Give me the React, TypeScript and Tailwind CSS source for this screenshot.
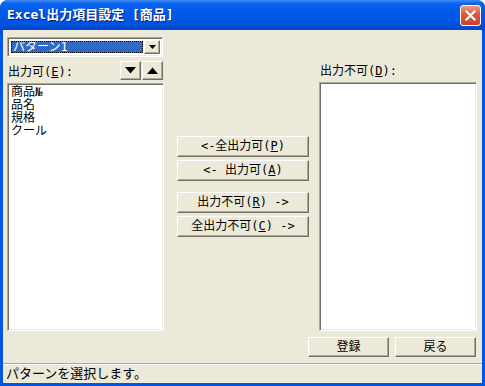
import type { ReactNode } from 'react';

const font = { fontFamily: '"DejaVu Sans Mono", "Noto Sans CJK JP", monospace' };

const raised =
  'border border-t-white border-l-white border-r-[#716f64] border-b-[#716f64] shadow-[inset_-1px_-1px_0_#aca899] bg-[#ece9d8]';
const sunken =
  'border border-t-[#aca899] border-l-[#aca899] border-r-white border-b-white shadow-[inset_1px_1px_0_#716f64,inset_-1px_-1px_0_#f1efe2] bg-white';

function Btn({ children, className = '' }: { children: ReactNode; className?: string }) {
  return (
    <div className={`${raised} flex items-center justify-center text-[12px] leading-[13px] text-black ${className}`}>
      {children}
    </div>
  );
}

function Tri({ down }: { down?: boolean }) {
  return (
    <svg width="11" height="7" viewBox="0 0 11 7">
      {down ? <polygon points="0,0 11,0 5.5,6.5" fill="#000" /> : <polygon points="0,7 11,7 5.5,0.5" fill="#000" />}
    </svg>
  );
}

export default function App() {
  const items = ['商品№', '品名', '規格', 'クール'];

  return (
    <div className="w-[485px] h-[386px] flex flex-col bg-[#0055e5] rounded-t-[8px] overflow-hidden select-none text-black" style={font}>
      {/* title bar */}
      <div className="h-[30px] shrink-0 flex items-center justify-between pl-[7px] pr-[4px] bg-[linear-gradient(to_bottom,#3f8cf3_0%,#0a62ef_12%,#0058e8_45%,#0053e0_80%,#0046c8_100%)]">
        <span className="text-white text-[13px] font-bold [text-shadow:1px_1px_0_#0a246a]">
          Excel出力項目設定 [商品]
        </span>
        <div className="w-[21px] h-[21px] rounded-[3px] border border-white bg-[linear-gradient(to_bottom,#f09a80,#e2583e_40%,#c94426)] flex items-center justify-center">
          <svg width="11" height="11" viewBox="0 0 11 11">
            <path d="M1.5 1.5 L9.5 9.5 M9.5 1.5 L1.5 9.5" stroke="#fff" strokeWidth="2.2" strokeLinecap="square" />
          </svg>
        </div>
      </div>

      {/* client */}
      <div className="flex-1 flex flex-col ml-[3px] mr-[3px] mb-[3px] bg-[#ece9d8]">
        <div className="flex-1 flex flex-col">
          <div className="flex pl-[4px] h-[301px]">
            {/* left column */}
            <div className="w-[157px] flex flex-col">
              <div className={`${sunken} mt-[7px] h-[20px] w-[156px] flex items-stretch p-[2px]`}>
                <div className="flex-1 m-px bg-[#316ac5] outline-1 outline-dotted outline-black -outline-offset-1 flex items-center pl-[2px] text-white text-[12px] leading-[13px]">
                  パターン1
                </div>
                <div className={`${raised} w-[16px] flex items-center justify-center`}>
                  <svg width="7" height="4" viewBox="0 0 7 4">
                    <polygon points="0,0 7,0 3.5,4" fill="#000" />
                  </svg>
                </div>
              </div>
              <div className="flex items-center mt-[4px] h-[19px]">
                <span className="text-[12px] leading-[13px] pl-[1px] mt-[4px]">
                  出力可(<u>E</u>):
                </span>
                <div className="ml-auto flex gap-[1px] pr-[1px]">
                  <Btn className="w-[21px] h-[19px]">
                    <Tri down />
                  </Btn>
                  <Btn className="w-[21px] h-[19px]">
                    <Tri />
                  </Btn>
                </div>
              </div>
              <div className={`${sunken} mt-[3px] flex-1 px-[3px] py-[2px] text-[12px] leading-[13px]`}>
                {items.map((it) => (
                  <div key={it}>{it}</div>
                ))}
              </div>
            </div>

            {/* middle buttons */}
            <div className="w-[132px] ml-[13px] flex flex-col pt-[106px]">
              <Btn className="h-[21px]">
                &lt;-全出力可(<u>P</u>)
              </Btn>
              <Btn className="h-[21px] mt-[3px]">
                &lt;- 出力可(<u>A</u>)
              </Btn>
              <Btn className="h-[21px] mt-[11px]">
                出力不可(<u>R</u>) -&gt;
              </Btn>
              <Btn className="h-[21px] mt-[3px]">
                全出力不可(<u>C</u>) -&gt;
              </Btn>
            </div>

            {/* right column */}
            <div className="w-[158px] ml-[10px] flex flex-col">
              <div className="h-[52px] flex items-end pb-[4px] pl-[1px] text-[12px] leading-[13px]">
                出力不可(<u>D</u>):
              </div>
              <div className={`${sunken} flex-1`} />
            </div>
          </div>

          <div className="flex justify-end gap-[6px] pr-[6px] mt-[6px]">
            <Btn className="w-[81px] h-[20px]">登録</Btn>
            <Btn className="w-[81px] h-[20px]">戻る</Btn>
          </div>
        </div>

        {/* status bar */}
        <div className="h-[20px] border-t border-t-[#aca899] shadow-[inset_0_1px_0_#fff] flex items-center pl-[3px] text-[13px] leading-[13px]">
          パターンを選択します。
        </div>
      </div>
    </div>
  );
}
